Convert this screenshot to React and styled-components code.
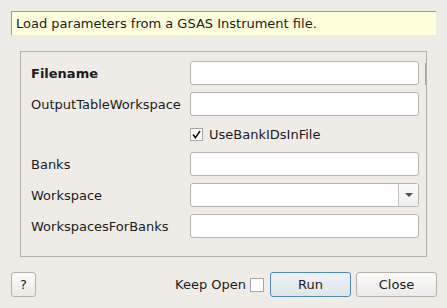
import React from 'react'
import styled, { createGlobalStyle } from 'styled-components'

const Global = createGlobalStyle`
  html, body {
    margin: 0;
    padding: 0;
    background: #efebe7;
  }
  body {
    font-family: "DejaVu Sans", "Liberation Sans", sans-serif;
    font-size: 13px;
    color: #1b1b1b;
  }
`

const Dialog = styled.div`
  width: 447px;
  height: 308px;
  box-sizing: border-box;
  padding: 11px 10px 0 11px;
  background: #efebe7;
`

const Description = styled.div`
  height: 24px;
  box-sizing: border-box;
  border-top: 1px solid #a09d99;
  border-left: 1px solid #a09d99;
  width: 425px;
  background: #ffffdc;
  padding-left: 4px;
  display: flex;
  align-items: center;
`

const Group = styled.div`
  position: relative;
  margin: 16px 10px 0 9px;
  height: 206px;
  box-sizing: border-box;
  border: 1px solid #b4b0ab;
  padding: 9px 7px 0 10px;
  &::after {
    content: '';
    position: absolute;
    right: 0px;
    top: 11px;
    width: 1px;
    height: 22px;
    background: #a9a5a1;
  }
`

const Form = styled.div`
  display: grid;
  grid-template-columns: 159px 1fr;
  row-gap: 7px;
`

const Label = styled.div`
  height: 24px;
  display: flex;
  align-items: center;
  font-weight: ${p => (p.$bold ? 'bold' : 'normal')};
`

const Input = styled.div`
  height: 24px;
  box-sizing: border-box;
  border: 1px solid #b8b4b0;
  border-radius: 3px;
  background: #ffffff;
`

const Combo = styled(Input)`
  display: flex;
  justify-content: flex-end;
`

const ComboArrow = styled.div`
  width: 19px;
  border-left: 1px solid #c6c2be;
  background: linear-gradient(#fbfbfb, #f1f0ef);
  border-radius: 0 2px 2px 0;
  display: flex;
  align-items: center;
  justify-content: center;
  &::before {
    content: '';
    border-left: 4px solid transparent;
    border-right: 4px solid transparent;
    border-top: 4px solid #4f4f4f;
  }
`

const CheckRow = styled.label`
  grid-column: 2;
  height: 22px;
  display: flex;
  align-items: center;
  gap: 6px;
`

const Box = styled.span`
  width: ${p => p.$size || 13}px;
  height: ${p => p.$size || 13}px;
  box-sizing: border-box;
  border: 1px solid #a9a5a1;
  background: #ffffff;
  display: flex;
  align-items: center;
  justify-content: center;
  flex-shrink: 0;
`

const Footer = styled.div`
  margin-top: 15px;
  display: flex;
  align-items: center;
  gap: 5px;
`

const Button = styled.button`
  height: 25px;
  width: ${p => p.$w || 81}px;
  box-sizing: border-box;
  font-family: inherit;
  font-size: 13px;
  color: #1b1b1b;
  border: 1px solid ${p => (p.$primary ? '#4f87b6' : '#b4b0ab')};
  border-radius: 3px;
  background: ${p =>
    p.$primary
      ? 'linear-gradient(#eef2f5, #dfe5ea)'
      : 'linear-gradient(#fbfbfa, #eceae8)'};
  padding: 0;
`

const Spacer = styled.div`
  flex: 1;
`

const KeepOpen = styled.label`
  display: flex;
  align-items: center;
  gap: 4px;
  margin-right: 1px;
`

const Check = () => (
  <svg width="9" height="9" viewBox="0 0 9 9">
    <path d="M1 4.6 L3.4 7.6 L8 1" fill="none" stroke="#111" strokeWidth="1.6" />
  </svg>
)

export default function App() {
  return (
    <Dialog>
      <Global />
      <Description>Load parameters from a GSAS Instrument file.</Description>
      <Group>
        <Form>
          <Label $bold>Filename</Label>
          <Input />
          <Label>OutputTableWorkspace</Label>
          <Input />
          <CheckRow>
            <Box>
              <Check />
            </Box>
            UseBankIDsInFile
          </CheckRow>
          <Label>Banks</Label>
          <Input />
          <Label>Workspace</Label>
          <Combo>
            <ComboArrow />
          </Combo>
          <Label>WorkspacesForBanks</Label>
          <Input />
        </Form>
      </Group>
      <Footer>
        <Button $w={25}>?</Button>
        <Spacer />
        <KeepOpen>
          Keep Open
          <Box $size={14} />
        </KeepOpen>
        <Button $primary>Run</Button>
        <Button>Close</Button>
      </Footer>
    </Dialog>
  )
}
